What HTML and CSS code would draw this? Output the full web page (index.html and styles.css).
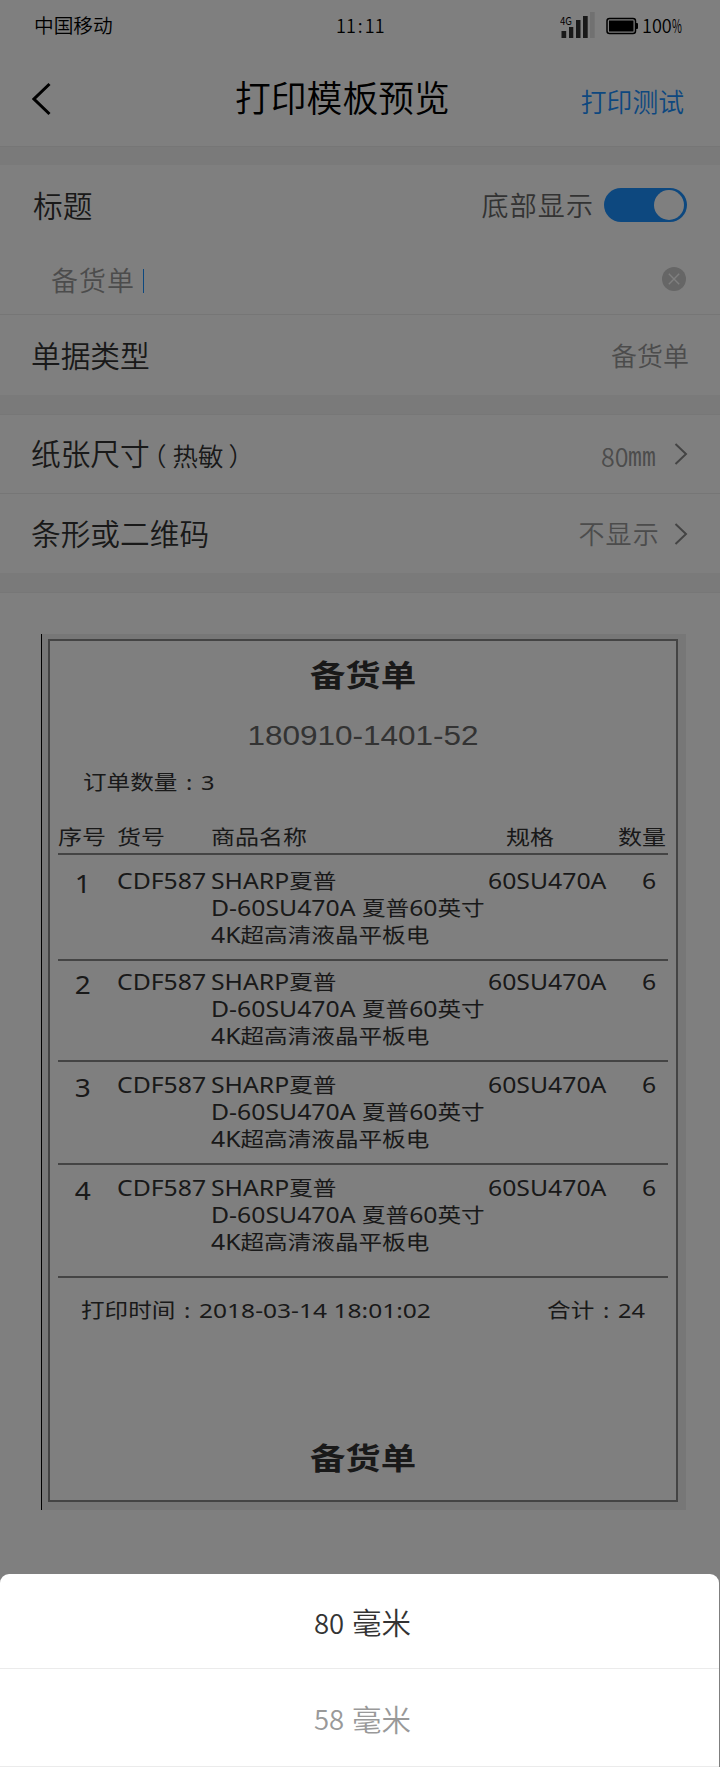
FILE: index.html
```html
<!DOCTYPE html>
<html lang="zh-CN">
<head>
<meta charset="utf-8">
<title>打印模板预览</title>
<link rel="stylesheet" href="styles.css">
</head>
<body>
<div class="screen">
  <div class="statusbar">
    <span class="carrier">中国移动</span>
    <span class="clock">11<i class="colon">:</i>11</span>
    <span class="indicators">
      <svg class="signal" width="36" height="28" viewBox="0 0 36 28">
        <text class="net" x="0" y="14" textLength="12" lengthAdjust="spacingAndGlyphs">4G</text>
        <path fill="#333" d="M1.500 20h4.700v7H1.500zM9 16h4.300v11H9zM16 9h4.500v18H16zM23 5h4.700v22H23z"/>
        <path fill="#e2e2e2" d="M30 1h4.700v26H30z"/>
      </svg>
      <svg class="battery" width="32" height="18" viewBox="0 0 32 18">
        <rect x="1" y="1.500" width="28.500" height="15" rx="2.500" fill="none" stroke="#000" stroke-width="1.500"/>
        <rect x="3" y="3.500" width="24.500" height="11" fill="#000"/>
        <path d="M30 6h1q1 0 1 1v4q0 1-1 1h-1z"/>
      </svg>
      <span class="percent">100<i class="pct">%</i></span>
    </span>
  </div>
  <div class="navbar">
    <svg class="back" width="20" height="34" viewBox="0 0 20 34"><path d="M17.500 2L2 17L17.500 32" fill="none" stroke="#000" stroke-width="3"/></svg>
    <h1 class="title">打印模板预览</h1>
    <a class="action">打印测试</a>
  </div>
  <div class="band band-top"></div>

  <div class="row row-title">
    <span class="label">标题</span>
    <span class="side"><span class="hint">底部显示</span><span class="toggle"><span class="knob"></span></span></span>
  </div>
  <div class="row row-input">
    <span class="field"><span class="entry">备货单</span><span class="caret"></span></span>
    <svg class="clear" width="24" height="24" viewBox="0 0 24 24"><circle cx="12" cy="12" r="12" fill="#ccc"/><path d="M6.800 6.800l10.400 10.400M17.200 6.800L6.800 17.200" stroke="#fff" stroke-width="1.400"/></svg>
  </div>
  <div class="row row-type">
    <span class="label">单据类型</span>
    <span class="value value-type">备货单</span>
  </div>
  <div class="band"></div>
  <div class="row row-size">
    <span class="label">纸张尺寸<small class="note">（<i class="kind">热敏</i>）</small></span>
    <span class="side"><span class="mm">80<i class="unit">mm</i></span>
    <svg class="chev" width="14" height="22" viewBox="0 0 14 22"><path d="M1.500 1l10.500 10L1.500 21" fill="none" stroke="#888" stroke-width="2"/></svg></span>
  </div>
  <div class="row row-code">
    <span class="label">条形或二维码</span>
    <span class="side"><span class="value value-code">不显示</span>
    <svg class="chev" width="14" height="22" viewBox="0 0 14 22"><path d="M1.500 1l10.500 10L1.500 21" fill="none" stroke="#888" stroke-width="2"/></svg></span>
  </div>
  <div class="band"></div>

  <div class="preview">
    <div class="paper">
      <div class="receipt">
        <h2 class="r-title">备货单</h2>
        <div class="r-number">180910-1401-52</div>
        <div class="r-count">订单数量<i class="rc">:</i>3</div>
        <div class="r-row r-head"><span>序号</span><span>货号</span><span>商品名称</span><span class="c-spec">规格</span><span class="c-num">数量</span></div>
        <div class="r-row r1"><span class="idx">1</span><span class="lat">CDF587</span><span><i class="lat">SHARP</i>夏普<br><i class="lat">D-60SU470A </i>夏普<i class="lat">60</i>英寸<br><i class="lat">4K</i>超高清液晶平板电</span><span class="lat">60SU470A</span><span class="lat qty">6</span></div>
        <div class="r-row r2"><span class="idx">2</span><span class="lat">CDF587</span><span><i class="lat">SHARP</i>夏普<br><i class="lat">D-60SU470A </i>夏普<i class="lat">60</i>英寸<br><i class="lat">4K</i>超高清液晶平板电</span><span class="lat">60SU470A</span><span class="lat qty">6</span></div>
        <div class="r-row r3"><span class="idx">3</span><span class="lat">CDF587</span><span><i class="lat">SHARP</i>夏普<br><i class="lat">D-60SU470A </i>夏普<i class="lat">60</i>英寸<br><i class="lat">4K</i>超高清液晶平板电</span><span class="lat">60SU470A</span><span class="lat qty">6</span></div>
        <div class="r-row r4"><span class="idx">4</span><span class="lat">CDF587</span><span><i class="lat">SHARP</i>夏普<br><i class="lat">D-60SU470A </i>夏普<i class="lat">60</i>英寸<br><i class="lat">4K</i>超高清液晶平板电</span><span class="lat">60SU470A</span><span class="lat qty">6</span></div>
        <div class="r-foot"><span>打印时间<i class="rc">:</i><i class="date">2018-03-14 18:01:02</i></span><span>合计<i class="rc">:</i>24</span></div>
        <h2 class="r-title r-end">备货单</h2>
      </div>
    </div>
  </div>

  <div class="mask"></div>
  <div class="sheet">
    <div class="option selected"><span class="digits">80</span><span>毫米</span></div>
    <div class="option"><span class="digits">58</span><span>毫米</span></div>
  </div>
</div>
</body>
</html>
```
FILE: styles.css
```css
* { box-sizing: border-box; }
body { margin: 0; background: #fff; }
i { font-style: normal; }
.screen {
  position: relative;
  width: 720px;
  height: 1767px;
  overflow: hidden;
  background: #fff;
  color: #333;
  font-family: "Noto Sans CJK SC", "Liberation Sans", sans-serif;
  font-weight: 350;
  white-space: nowrap;
}

/* status bar */
.statusbar {
  height: 50px;
  display: grid;
  grid-template-columns: 302px 1fr auto;
  padding: 0 37px 0 34px;
  align-items: center;
  color: #000;
}
.carrier { font-size: 19.7px; line-height: 28px; padding-bottom: 1px; }
.clock { font-size: 18px; line-height: 28px; display: flex; }
.colon { width: 9px; text-align: center; }
.indicators { display: flex; align-items: center; }
.signal { margin: -1px 10px 0 0; }
.net { font: 11px "Noto Sans CJK SC", sans-serif; }
.battery { margin-right: 4px; margin-top: 2px; }
.percent { font-size: 18px; line-height: 28px; display: flex; width: 41px; }
.pct { transform: scaleX(.6); transform-origin: left; width: 10px; }

/* navigation bar */
.navbar {
  height: 96px;
  display: grid;
  grid-template-columns: 203px 1fr auto;
  padding: 0 36px 0 32px;
  align-items: center;
}
.title { margin: 0; font-size: 35.8px; font-weight: 350; line-height: 52px; color: #000; padding-bottom: 4px; }
.back { margin-top: 1px; }
.action { font-size: 25.8px; line-height: 38px; color: #1b90ff; padding-top: 5px; }

.band { height: 20px; background: #f4f4f4; border-bottom: 1px solid #efefef; }
.band-top { height: 19px; border-top: 1px solid #ececec; border-bottom: 0; }

/* setting rows */
.row { display: flex; align-items: center; justify-content: space-between; padding: 0 32px 0 31px; }
.row-title { height: 80px; padding: 0 33px 0 33px; }
.row-input { height: 70px; padding: 0 34px 0 51px; border-bottom: 1px solid #ececec; }
.row-type { height: 80px; padding-right: 31px; }
.row-size { height: 79px; border-bottom: 1px solid #ececec; }
.row-code { height: 79px; }
.label { font-size: 29.7px; line-height: 44px; display: flex; align-items: center; padding-bottom: 2px; }
.row-title .label, .row-type .label { padding-bottom: 0; }
.side { display: flex; align-items: center; }
.hint { font-size: 27px; letter-spacing: 1.100px; line-height: 40px; color: #666; margin-right: 10px; }
.toggle { width: 83px; height: 34px; border-radius: 17px; background: #1b90ff; display: flex; align-items: center; justify-content: flex-end; padding-right: 3px; }
.knob { width: 30px; height: 30px; border-radius: 50%; background: #fff; }
.field { display: flex; align-items: center; }
.entry { font-size: 27px; letter-spacing: 1px; line-height: 40px; color: #999; }
.caret { width: 1px; height: 24px; margin: 3px 0 0 8px; background: #1b90ff; }
.clear { margin-bottom: 2px; }
.value { color: #999; line-height: 38px; }
.value-type { font-size: 26px; }
.value-code { font-size: 26px; letter-spacing: 1.200px; margin-right: 14px; padding-bottom: 1px; }
.note { font-size: 25.5px; line-height: 38px; margin-left: 4px; padding-top: 4px; font-feature-settings: "halt"; }
.kind { margin: 0 5px 0 6px; }
.mm { font-size: 25px; line-height: 36px; color: #999; display: flex; width: 56px; margin-right: 17px; padding-top: 3px; }
.unit { font: 27px/42px "Liberation Mono", monospace; height: 36px; transform: scaleX(.86); transform-origin: left; width: 28px; }

/* receipt preview */
.preview { padding: 41px 34px 0 41px; }
.paper { height: 876px; background: #eee; border-left: 1px solid #000; padding: 5px 8px 8px 6px; }
.receipt { height: 863px; width: 630px; border: 2px solid #888; background: #fff; font: 400 20px/27px "Noto Sans", "Noto Sans CJK SC", sans-serif; }
.r-title { margin: 16px 0 0; font-size: 30px; line-height: 36px; font-weight: 700; text-align: center; transform: scaleX(1.180); }
.r-number { margin-top: 25px; font: 28px/36px "Liberation Sans", sans-serif; color: #666; text-align: center; transform: scaleX(1.125); }
.r-count { margin: 15px 0 0 33px; transform: scaleX(1.180); transform-origin: left; }
.rc { display: inline-block; width: 20px; text-align: center; }
.lat { font-size: 21px; line-height: 26px; }
i.lat { line-height: 20px; }
.date { font-size: 20.8px; line-height: 20px; }
.r-row { display: grid; grid-template-columns: 59px 94px 277px 128px 1fr; margin: 0 8px 0 8px; border-bottom: 2px solid #888; }
.r-row > span { transform: scaleX(1.180); transform-origin: left top; }
.r-head { margin-top: 28px; height: 31px; }
.r-head > span { transform: scaleX(1.200); }
.r-head .c-spec { margin-left: 18px; }
.r-head .c-num { margin-left: 2px; }
.r-row > .idx { font-size: 25px; transform: scaleX(1.120); padding: 2px 0 0 15px; }
.qty { padding-left: 22px; }
.r1 { height: 106px; padding-top: 13px; }
.r2 { height: 101px; padding-top: 8px; }
.r3 { height: 103px; padding-top: 10px; }
.r4 { height: 113px; padding-top: 10px; }
.r-foot { display: flex; justify-content: space-between; padding: 19px 31px 0 31px; }
.r-foot span:first-child { transform: scaleX(1.180); transform-origin: left; }
.r-foot span:last-child { transform: scaleX(1.180); transform-origin: right; }
.r-end { margin-top: 116px; }

/* dimmed backdrop and bottom sheet */
.mask { position: absolute; inset: 0; background: rgba(0, 0, 0, .5); }
.sheet { position: absolute; left: 0; right: 1px; bottom: 0; height: 193px; background: #fff; border-radius: 9px 9px 0 0; }
.option { height: 95px; display: flex; align-items: center; justify-content: center; gap: 8px; font-size: 29.5px; color: #999; border-bottom: 1px solid #ebebeb; padding-left: 6px; }
.option + .option { height: 98px; }
.selected { color: #333; }
.digits { font-size: 27.5px; line-height: 40px; padding-top: 1px; }
```
